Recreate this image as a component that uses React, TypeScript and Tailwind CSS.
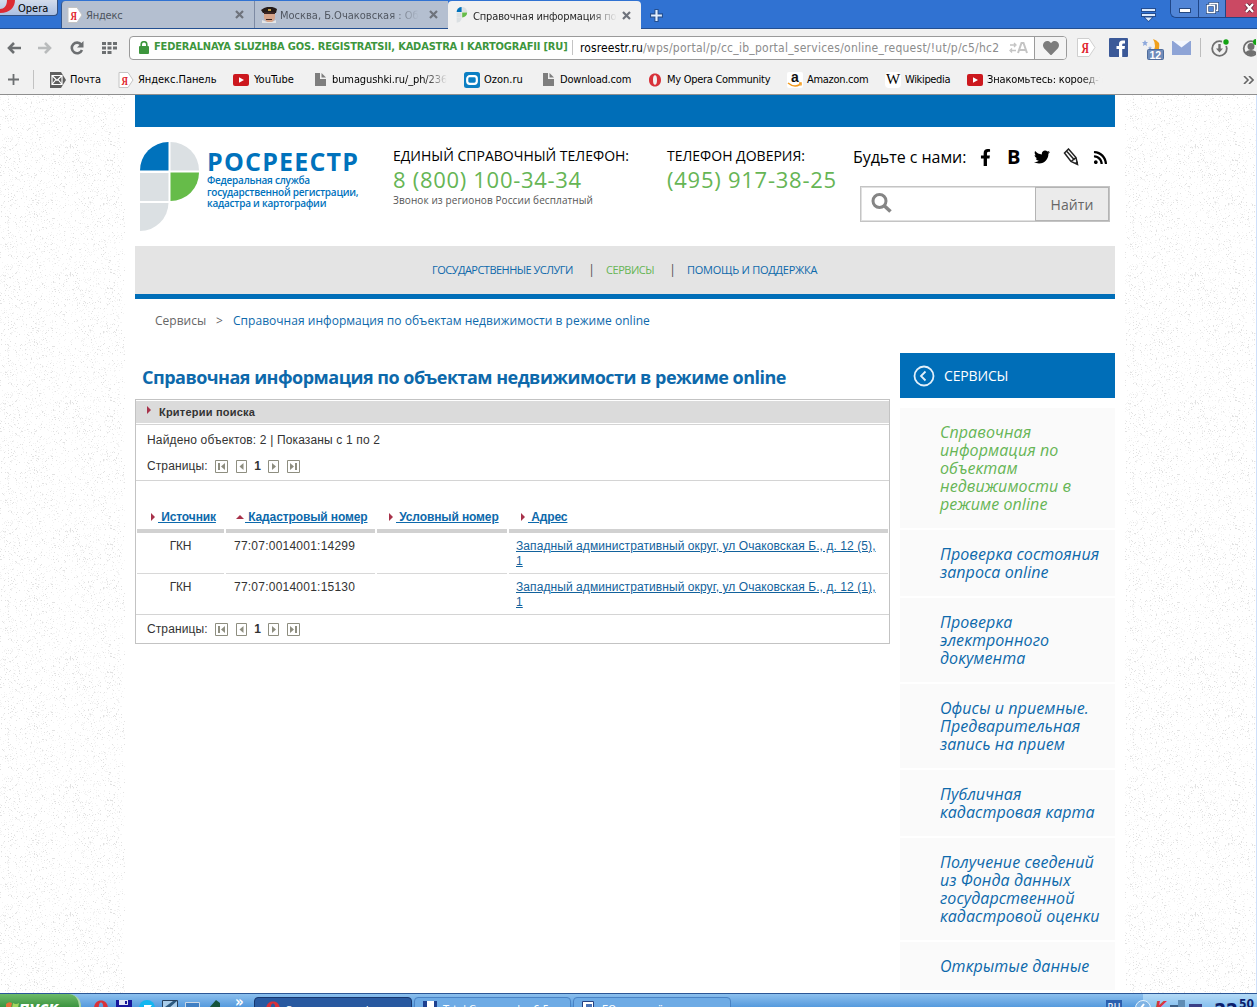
import type { ReactNode } from "react"
import { FaFacebookF, FaTwitter, FaRss, FaHeart } from "react-icons/fa"

const sidebarItems = [
  { lines: ["Справочная", "информация по", "объектам", "недвижимости в", "режиме online"], active: true },
  { lines: ["Проверка состояния", "запроса online"] },
  { lines: ["Проверка", "электронного", "документа"] },
  { lines: ["Офисы и приемные.", "Предварительная", "запись на прием"] },
  { lines: ["Публичная", "кадастровая карта"] },
  { lines: ["Получение сведений", "из Фонда данных", "государственной", "кадастровой оценки"] },
  { lines: ["Открытые данные"] },
]

const rows = [
  { source: "ГКН", number: "77:07:0014001:14299", address: "Западный административный округ, ул Очаковская Б., д. 12 (5)," },
  { source: "ГКН", number: "77:07:0014001:15130", address: "Западный административный округ, ул Очаковская Б., д. 12 (1)," },
]

// Speckles for the paper texture on both sides of the page
function speckles(count: number, seed: number) {
  let s = seed
  let d = ""
  const next = () => {
    s = (s * 1103515245 + 12345) % 2147483648
    return s / 2147483648
  }
  for (let i = 0; i < count; i++) {
    d += `M${Math.floor(next() * 128)} ${Math.floor(next() * 128)}h1v1h-1z`
  }
  return d
}

const lightDots = speckles(1500, 7)
const darkDots = speckles(520, 91)

function Texture({ id }: { id: string }) {
  return (
    <svg className="block size-full" shapeRendering="crispEdges">
      <defs>
        <pattern id={id} width="128" height="128" patternUnits="userSpaceOnUse">
          <path d={lightDots} fill="#f3f3f3" />
          <path d={darkDots} fill="#e2e2e2" />
        </pattern>
      </defs>
      <rect width="100%" height="100%" fill={`url(#${id})`} />
    </svg>
  )
}

function YandexIcon() {
  return (
    <svg width="16" height="16" viewBox="0 0 16 16">
      <path d="M1 .5h9l5 7.5-5 7.5H1Z" fill="#fff" stroke="#c4c4c4" />
      <text transform="translate(3.5 12.500) scale(.68 1)" fontSize="13" fontWeight="700" fill="#e0222b" fontFamily="Liberation Serif, serif">
        Я
      </text>
    </svg>
  )
}

function RosreestrIcon() {
  return (
    <svg width="12" height="16" viewBox="0 0 60 90">
      <path d="M0 28A28 28 0 0 1 28 0V28Z" fill="#0072bc" />
      <path d="M31 0A28 28 0 0 1 59 28H31Z" fill="#dbe0e3" />
      <path d="M0 31H28V59H0Z" fill="#dbe0e3" />
      <path d="M31 31H59A28 28 0 0 1 31 59Z" fill="#66bc49" />
      <path d="M0 61H28A28 28 0 0 1 0 89Z" fill="#dbe0e3" />
    </svg>
  )
}

function CloseIcon() {
  return (
    <svg width="9" height="9" viewBox="0 0 9 9">
      <path d="M1 1 8 8M8 1 1 8" stroke="#6e737c" strokeWidth="2.2" />
    </svg>
  )
}

function YouTubeIcon() {
  return (
    <svg width="16" height="12" viewBox="0 0 16 12">
      <rect width="16" height="12" rx="2" fill="#cc181e" />
      <path d="M6 3.3v5.4L11 6Z" fill="#fff" />
    </svg>
  )
}

function DocIcon() {
  return (
    <svg width="11" height="13" viewBox="0 0 11 13">
      <path d="M0 0h5v6h6v7H0Z" fill="#7e7e7e" />
      <path d="M6.500 0v4.500H11Z" fill="#7e7e7e" />
    </svg>
  )
}

function OperaIcon({ size = 14 }: { size?: number }) {
  return (
    <svg width={size} height={size} viewBox="0 0 14 14">
      <path d="M7 .5C10.500 .5 13 3 13 7s-2.500 6.500-6 6.500S1 11 1 7 3.500.5 7 .5Zm0 1.700C5.600 2.200 5 4 5 7s.6 4.800 2 4.800S9 10 9 7s-.6-4.800-2-4.800Z" fill="#d8323a" fillRule="evenodd" />
    </svg>
  )
}

function Tab({ icon, title, className }: { icon: ReactNode; title: ReactNode; className: string }) {
  return (
    <div className={`flex h-[27px] items-center ${className}`}>
      <span className="flex w-[19px] shrink-0 justify-start">{icon}</span>
      <span className="flex-1 overflow-hidden pt-[3px] leading-4 whitespace-nowrap">{title}</span>
      <CloseIcon />
    </div>
  )
}

function TitleBar() {
  return (
    <div className="flex h-[29px] shrink-0 border-b border-[#234f91] bg-[#3072d2] text-[11px]">
      <div className="flex h-4 w-[58px] items-start overflow-hidden rounded-br border-r border-b border-[#33507f] bg-linear-to-b from-[#d3dcec] to-[#aabfe2]">
        <svg width="18" height="15" viewBox="0 0 18 15">
          <path d="M0 0h15c0 7-5 13-15 13V9c4 0 7-3 7-9Z" fill="#dc2a33" />
        </svg>
        <span className="pt-px text-[11px] leading-[15px] text-black">Opera</span>
      </div>
      <div className="ml-[3px] flex pt-px">
        <Tab
          className="w-[193px] rounded-tl border-l border-[#30548c] bg-[#b4bfd0] pr-[10px] pl-[5px] text-[#4d535d]"
          icon={<YandexIcon />}
          title={<span className="tracking-[-0.2px]">Яндекс</span>}
        />
        <Tab
          className="w-[194px] border-l border-[#7d8aa3] bg-[#b4bfd0] pr-[10px] pl-[6px] text-[#4d535d]"
          icon={
            <svg width="17" height="16" viewBox="0 0 17 16">
              <path d="M3 6h11v5q-1 4-5 5-5-1-6-5Z" fill="#d6a58b" />
              <path d="M0 3Q8-3 16 2l-1 4H2Z" fill="#241b19" />
              <path d="M3 5h11v2H3ZM5 12h6v1H5Z" fill="#3a2522" />
              <path d="M1 13l5 2h5l4-2v3H1Z" fill="#e5e5e5" />
              <path d="M7 2h3v2H7Z" fill="#c6a048" />
            </svg>
          }
          title={
            <span className="bg-linear-to-r from-[#4d535d] from-80% to-[#b4bfd0] bg-clip-text text-transparent">
              Москва, Б.Очаковская : Об
            </span>
          }
        />
        <Tab
          className="h-[28px] w-[193px] rounded-t bg-[#f1f1f1] pr-[10px] pl-[6px] text-[#222]"
          icon={
            <span className="pl-[2px]">
              <RosreestrIcon />
            </span>
          }
          title={
            <span className="bg-linear-to-r from-[#222] from-80% to-[#f1f1f1] bg-clip-text tracking-[-0.15px] text-transparent">
              Справочная информация по
            </span>
          }
        />
      </div>
      <svg className="mt-[9px] ml-[9px]" width="13" height="13" viewBox="0 0 12 12">
        <path d="M4.500 .5h3v4h4v3h-4v4h-3v-4h-4v-3h4Z" fill="#e4effd" stroke="#234f91" />
      </svg>
      <svg className="mt-2 ml-auto" width="15" height="14" viewBox="0 0 15 14">
        <path d="M0 0h15v4H0ZM0 5h15v4H0ZM2.500 9h10l-5 5Z" fill="#244d90" />
        <path d="M1 1h13v2H1ZM1 6h13v2H1ZM4 9.500h7l-3.500 3.500Z" fill="#dbeafc" />
      </svg>
      <div className="ml-[14px] flex h-[18px] w-[87px] overflow-hidden rounded-bl-md border-b border-l border-[#1f4688]">
        <div className="flex w-[27px] items-center justify-center bg-[#5185d6]">
          <span className="mt-1 h-[5px] w-3 border border-[#25487f] bg-white" />
        </div>
        <div className="flex w-[28px] items-start justify-center border-x border-[#1f4688] bg-[#5185d6] pt-[2px]">
          <svg width="13" height="12" viewBox="0 0 13 12">
            <path d="M4 2.500v-1h7.500v7H10M1.500 3.500h7v7h-7Z" fill="none" stroke="#25487f" strokeWidth="3" />
            <path d="M4 2.500v-1h7.500v7H10M1.500 3.500h7v7h-7Z" fill="none" stroke="#fff" strokeWidth="1.600" />
          </svg>
        </div>
        <div className="flex flex-1 items-start justify-end bg-[#cb4963] pt-[3px] pr-[2px]">
          <svg width="11" height="10" viewBox="0 0 11 10">
            <path d="M2 1 9 9M9 1 2 9" stroke="#6c2639" strokeWidth="4" />
            <path d="M2 1 9 9M9 1 2 9" stroke="#fff" strokeWidth="2.300" />
          </svg>
        </div>
      </div>
    </div>
  )
}

function Toolbar() {
  return (
    <div className="flex h-[35px] shrink-0 items-center pt-[2px]">
      <svg className="ml-[7px]" width="14" height="12" viewBox="0 0 14 12">
        <path d="M7 1 2 6l5 5M2 6h12" fill="none" stroke="#6c6f71" strokeWidth="2.600" />
      </svg>
      <svg className="ml-[17px]" width="14" height="12" viewBox="0 0 14 12">
        <path d="M7 1l5 5-5 5M12 6H0" fill="none" stroke="#b9bbbc" strokeWidth="2.600" />
      </svg>
      <svg className="ml-[18px]" width="14" height="14" viewBox="0 0 14 14">
        <path d="M11.300 3.600A5.300 5.300 0 1 0 12 9" fill="none" stroke="#6c6f71" strokeWidth="2.600" />
        <path d="M13.500 0v6.500H7Z" fill="#6c6f71" />
      </svg>
      <svg className="ml-[18px]" width="15" height="12" viewBox="0 0 15 12">
        <path d="M0 0h4v3H0ZM5.500 0h4v3h-4ZM11 0h4v3h-4ZM0 4.500h4v3H0ZM5.500 4.500h4v3h-4ZM11 4.500h4v3h-4ZM0 9h4v3H0ZM5.500 9h4v3h-4Z" fill="#6c6f71" />
      </svg>
      <div className="ml-[12px] flex h-6 w-[938px] items-center overflow-hidden rounded border border-[#9a9a9a] bg-white whitespace-nowrap">
        <svg className="ml-[9px]" width="10" height="13" viewBox="0 0 10 13">
          <path d="M2.200 6V3.500a2.800 2.800 0 0 1 5.600 0V6" fill="none" stroke="#3d963d" strokeWidth="1.600" />
          <rect y="5" width="10" height="8" rx="1" fill="#3d963d" />
        </svg>
        <span className="ml-[5px] w-[413px] text-[11px] font-bold tracking-[-0.18px] text-[#3d963d]">
          FEDERALNAYA SLUZHBA GOS. REGISTRATSII, KADASTRA I KARTOGRAFII [RU]
        </span>
        <span className="ml-[5px] h-[15px] w-px bg-[#c4c4c4]" />
        <span className="ml-[7px] w-[429px] text-[12px] tracking-[0.25px] text-[#8c8c8c]">
          <span className="tracking-[0.1px] text-black">rosreestr.ru</span>/wps/portal/p/cc_ib_portal_services/online_request/!ut/p/c5/hc2
        </span>
        <svg className="shrink-0" width="19" height="12" viewBox="0 0 19 12">
          <path d="M1 3h5M5 1l2 2-2 2M7 8.500H2M3 6.500l-2 2 2 2" fill="none" stroke="#c4c4c4" strokeWidth="1.300" />
          <path d="M9 11 12.500 1h2L18 11M10.500 8h6" fill="none" stroke="#c4c4c4" strokeWidth="2" />
        </svg>
        <span className="ml-auto flex h-full w-8 shrink-0 items-center justify-center border-l border-[#9a9a9a] bg-[#f4f4f4]">
          <FaHeart className="size-4 text-[#7d7d7d]" />
        </span>
      </div>
      <svg className="ml-[10px]" width="19" height="19" viewBox="0 0 19 19">
        <path d="M.5 .5h11.500L18 9.500l-6 9H.5Z" fill="#fff" stroke="#cfcfcf" />
        <text transform="translate(4.500 14.500) scale(.68 1)" fontSize="15" fontWeight="700" fill="#e0222b" fontFamily="Liberation Serif, serif">
          Я
        </text>
      </svg>
      <svg className="ml-[13px]" width="19" height="19" viewBox="0 0 19 19">
        <rect width="19" height="19" rx="1" fill="#3b5998" />
        <path d="M10 19v-8H7.500V8H10V6q0-3.500 3.500-3.500H16v3h-1.500q-1.300 0-1.300 1.300V8H16l-.4 3h-2.400v8Z" fill="#fff" />
      </svg>
      <svg className="mt-1 ml-[13px]" width="23" height="23" viewBox="0 0 23 23">
        <path d="M12 1q8 2 6 10-2 5-10 5 6-3 6-8 0-4-2-7Z" fill="#f0a01c" />
        <path d="m4 2 1 2h2L5.500 5.500 6 8 4 6.700 2 8l.5-2.500L1 4h2ZM9 8l.6 1.400H11L10 10.500l.3 1.500L9 11l-1.300 1 .3-1.500L7 9.400h1.400Z" fill="#8fa9dc" />
        <rect x="6.500" y="11.500" width="16" height="10" rx="1" fill="#6f8cba" stroke="#4f6c9b" />
        <text x="8.500" y="20.500" fontSize="10.500" fontWeight="700" fill="#fff" fontFamily="Liberation Sans, sans-serif">12</text>
      </svg>
      <svg className="ml-[8px]" width="19" height="14" viewBox="0 0 19 14">
        <rect width="19" height="14" fill="#8ea4d6" />
        <path d="M1 0h17L9.500 6.500Z" fill="#f4f7fd" />
      </svg>
      <span className="ml-[9px] h-[19px] w-px bg-[#bdbdbd]" />
      <svg className="ml-[10px]" width="18" height="18" viewBox="0 0 18 18">
        <circle cx="8.500" cy="9.500" r="7.300" fill="none" stroke="#707070" strokeWidth="1.800" />
        <path d="M7.300 5h2.400v4.500H12l-3.500 4-3.500-4h2.300Z" fill="#707070" />
        <circle cx="15" cy="3" r="4" fill="#f1f1f1" />
        <circle cx="15" cy="3" r="2.700" fill="#12a312" />
      </svg>
      <svg className="ml-[13px] shrink-0" width="14" height="18" viewBox="0 0 14 18">
        <circle cx="9" cy="9.500" r="7.300" fill="none" stroke="#707070" strokeWidth="1.800" />
        <circle cx="9" cy="7.500" r="3.500" fill="#707070" />
        <path d="M3 14q2-3 6-3t6 3l-6 3Z" fill="#707070" />
        <circle cx="14" cy="3" r="3" fill="#12a312" />
      </svg>
    </div>
  )
}

function Bookmark({ icon, label, className, textClass = "" }: { icon: ReactNode; label: string; className: string; textClass?: string }) {
  return (
    <div className={`flex shrink-0 items-center whitespace-nowrap ${className}`}>
      <span className="flex w-5 shrink-0 items-center">{icon}</span>
      <span className={`mt-[2px] ${textClass}`}>{label}</span>
    </div>
  )
}

function BookmarksBar() {
  return (
    <div className="flex h-[31px] shrink-0 items-center border-b border-[#8f8f8f] pt-px text-[11px] text-black">
      <svg className="ml-[8px]" width="11" height="11" viewBox="0 0 11 11">
        <path d="M5.500 0v11M0 5.500h11" stroke="#6c6f71" strokeWidth="1.800" />
      </svg>
      <span className="ml-[14px] h-[19px] w-px bg-[#c2c2c2]" />
      <Bookmark
        className="ml-4 w-[68px]"
        label="Почта"
        icon={
          <svg width="16" height="16" viewBox="0 0 16 16">
            <path d="M0 0h11l5 8-5 8H0Z" fill="#5f5f5f" />
            <path d="M2 3.500h10v9H2ZM2 3.500l5 5 5-5M2 12.500l4-5M12 12.500l-4-5" fill="none" stroke="#fff" strokeWidth="1.200" />
          </svg>
        }
      />
      <Bookmark className="w-[115px]" label="Яндекс.Панель" textClass="tracking-[-0.05px]" icon={<YandexIcon />} />
      <Bookmark className="w-[82px]" label="YouTube" textClass="ml-px" icon={<YouTubeIcon />} />
      <Bookmark
        className="w-[149px]"
        label="bumagushki.ru/_ph/236"
        textClass="-ml-[3px] bg-linear-to-r from-black from-75% to-[#f1f1f1] bg-clip-text tracking-[-0.1px] text-transparent"
        icon={<DocIcon />}
      />
      <Bookmark
        className="w-[79px]"
        label="Ozon.ru"
        icon={
          <svg width="16" height="16" viewBox="0 0 16 16">
            <rect width="16" height="16" rx="2.500" fill="#0b7fc3" />
            <rect x="3.200" y="4.200" width="9.600" height="7.600" rx="2.500" fill="none" stroke="#fff" strokeWidth="2.200" />
          </svg>
        }
      />
      <Bookmark className="w-[105px]" label="Download.com" textClass="-ml-[3px] tracking-[-0.2px]" icon={<DocIcon />} />
      <Bookmark className="w-[139px]" label="My Opera Community" textClass="-ml-px tracking-[-0.28px]" icon={<OperaIcon />} />
      <Bookmark
        className="w-[98px]"
        label="Amazon.com"
        textClass="tracking-[-0.3px]"
        icon={
          <svg width="16" height="16" viewBox="0 0 16 16">
            <rect width="16" height="16" rx="2" fill="#fff" />
            <text x="4" y="10" fontSize="14" fontWeight="700" fill="#111" fontFamily="Liberation Sans, sans-serif">a</text>
            <path d="M1 11q6 5 12 1.500M12 11h2v2.500" fill="none" stroke="#f39a1c" strokeWidth="1.500" />
          </svg>
        }
      />
      <Bookmark
        className="w-[82px]"
        label="Wikipedia"
        textClass="tracking-[-0.35px]"
        icon={
          <span className="flex h-4 w-4 items-center justify-center rounded-sm bg-white text-[15px] text-black [font-family:'Liberation_Serif',serif]">
            W
          </span>
        }
      />
      <Bookmark
        className="w-[120px]"
        label="Знакомьтесь: короед-т"
        textClass="bg-linear-to-r from-black from-78% to-[#f1f1f1] to-97% bg-clip-text tracking-[-0.15px] text-transparent"
        icon={<YouTubeIcon />}
      />
      <svg className="mr-[3px] ml-auto" width="11" height="8" viewBox="0 0 11 8">
        <path d="m1 0 4 4-4 4M6 0l4 4-4 4" fill="none" stroke="#666" strokeWidth="1.600" />
      </svg>
    </div>
  )
}

function SiteHeader() {
  return (
    <header className="flex h-[119px] whitespace-nowrap">
      <svg className="mt-[15px] ml-[5px] shrink-0" width="60" height="90" viewBox="0 0 60 90">
        <path d="M0 28.500A28.500 28.500 0 0 1 28.500 0V28.500Z" fill="#0072bc" />
        <path d="M30.500 0A28.500 28.500 0 0 1 59 28.500H30.500Z" fill="#dbe0e3" />
        <path d="M0 31H28.500V59H0Z" fill="#dbe0e3" />
        <path d="M30.500 30.500H59A28.500 28.500 0 0 1 30.500 59Z" fill="#66bc49" />
        <path d="M0 61H28.500A28.500 28.500 0 0 1 0 89Z" fill="#dbe0e3" />
      </svg>
      <div className="mt-[21px] ml-[7px] w-[186px] text-[#0072bc]">
        <div className="h-[27px] text-[25px] leading-[26px] font-bold tracking-[1.2px]">РОСРЕЕСТР</div>
        <div className="text-[10px] leading-[11.5px] font-semibold tracking-[-0.23px]">
          <div>Федеральная служба</div>
          <div>государственной регистрации,</div>
          <div>кадастра и картографии</div>
        </div>
      </div>
      <div className="mt-[19px] w-[274px]">
        <div className="text-[14px] leading-5 text-black">ЕДИНЫЙ СПРАВОЧНЫЙ ТЕЛЕФОН:</div>
        <div className="-mt-[2px] text-[22px] leading-[30px] tracking-[0.7px] text-[#66b555]">8 (800) 100-34-34</div>
        <div className="text-[10px] leading-[13px] tracking-[0.1px] text-[#555]">Звонок из регионов России бесплатный</div>
      </div>
      <div className="mt-[19px] w-[186px]">
        <div className="text-[14px] leading-5 text-black">ТЕЛЕФОН ДОВЕРИЯ:</div>
        <div className="-mt-[2px] text-[22px] leading-[30px] tracking-[0.75px] text-[#66b555]">(495) 917-38-25</div>
      </div>
      <div className="mt-[18px] w-[257px]">
        <div className="flex h-6 items-center text-black">
          <span className="w-[125px] text-[16px] tracking-[-0.05px]">Будьте с нами:</span>
          <FaFacebookF className="-ml-px size-[17px]" />
          <span className="ml-[13px] w-[14px] text-[20px] font-bold">В</span>
          <FaTwitter className="ml-[13px] size-4" />
          <svg className="ml-[13px]" width="16" height="18" viewBox="0 0 16 18">
            <path d="m1.500 5 4-4 7.500 8.500 1.500 7-6.500-3ZM3.500 3l8 9M8 13.500l5-4" fill="none" stroke="#222" strokeWidth="1.500" />
            <path d="m12 14.500 3 2.500v-3.500Z" fill="#222" />
          </svg>
          <FaRss className="ml-[14px] size-[15px]" />
        </div>
        <div className="mt-[17px] ml-[7px] flex h-9 w-[250px] border border-[#c4c4c4] ring-1 ring-[#e0e0e0] ring-inset">
          <div className="flex-1">
            <svg className="mt-[6px] ml-[10px]" width="21" height="20" viewBox="0 0 21 20">
              <circle cx="8.500" cy="8" r="6.500" fill="none" stroke="#858585" strokeWidth="3" />
              <path d="m13 12.500 6.500 6" stroke="#858585" strokeWidth="3.600" />
            </svg>
          </div>
          <button className="w-[74px] border border-[#b4b4b4] bg-[#ebebeb] text-[14px] tracking-[0.1px] text-[#666]">Найти</button>
        </div>
      </div>
    </header>
  )
}

function Pager() {
  return (
    <div className="flex items-center">
      <span className="w-[68px] tracking-[0.1px]">Страницы:</span>
      <svg width="13" height="13" viewBox="0 0 13 13">
        <path d="M.5 .5h12v12H.5Z" fill="#fff" stroke="#8e8e80" />
        <path d="M3 3h2v7H3ZM10 3v7L6 6.500Z" fill="#8e8e80" />
      </svg>
      <svg className="ml-2" width="11" height="13" viewBox="0 0 11 13">
        <path d="M.5 .5h10v12H.5Z" fill="#fff" stroke="#8e8e80" />
        <path d="M7.500 3v7l-4-3.500Z" fill="#8e8e80" />
      </svg>
      <b className="w-[21px] text-center">1</b>
      <svg width="11" height="13" viewBox="0 0 11 13">
        <path d="M.5 .5h10v12H.5Z" fill="#fff" stroke="#8e8e80" />
        <path d="M4 3v7l4-3.500Z" fill="#8e8e80" />
      </svg>
      <svg className="ml-2" width="13" height="13" viewBox="0 0 13 13">
        <path d="M.5 .5h12v12H.5Z" fill="#fff" stroke="#8e8e80" />
        <path d="M8 3h2v7H8ZM3 3v7l4-3.500Z" fill="#8e8e80" />
      </svg>
    </div>
  )
}

function Arrow({ up = false }: { up?: boolean }) {
  return up ? (
    <svg width="8" height="4" viewBox="0 0 8 4">
      <path d="M0 4h8L4 0Z" fill="#a8324a" />
    </svg>
  ) : (
    <svg width="4" height="8" viewBox="0 0 4 8">
      <path d="M0 0v8l4-4Z" fill="#a8324a" />
    </svg>
  )
}

function ColumnHeader({ label, up, className }: { label: string; up?: boolean; className: string }) {
  return (
    <div className={`flex h-[52px] items-center border-b-4 border-[#d1d1d1] pt-6 ${className}`}>
      <Arrow up={up} />
      <a className={`font-bold tracking-[-0.12px] whitespace-pre text-[#0d69ab] underline ${up ? "ml-px" : "ml-[3px]"}`}>{` ${label}`}</a>
    </div>
  )
}

function Results() {
  return (
    <div className="mt-[9px] h-[245px] w-[755px] border border-[#c3c3c3] text-[12px] text-[#333] [font-family:'Liberation_Sans',Arial,sans-serif]">
      <div className="mt-px flex h-[22px] items-center bg-[#dbdbdb] pl-[11px]">
        <span className="-mt-1">
          <Arrow />
        </span>
        <b className="ml-2 text-[11px] tracking-[0.22px] text-[#333]">Критерии поиска</b>
      </div>
      <div className="mt-px h-[57px] border-y border-[#d4d4d4] pt-[7px] pl-[11px]">
        <div className="leading-4 tracking-[0.15px]">Найдено объектов: 2 | Показаны с 1 по 2</div>
        <div className="mt-[9px]">
          <Pager />
        </div>
      </div>
      <div className="grid grid-cols-[87px_149px_130px_379px] gap-x-[2px] px-px">
        <ColumnHeader label="Источник" className="pl-[14px]" />
        <ColumnHeader label="Кадастровый номер" up className="pl-[10px]" />
        <ColumnHeader label="Условный номер" className="pl-[12px]" />
        <ColumnHeader label="Адрес" className="pl-[12px]" />
      </div>
      {rows.map((row, i) => (
        <div key={row.number} className={`grid grid-cols-[87px_149px_130px_379px] gap-x-[2px] px-px leading-[15px] ${i === 0 ? "h-[41px]" : "h-10"}`}>
          <div className={`pt-[6px] text-center tracking-[-0.2px] ${i === 0 ? "border-b border-[#d8d8d8]" : ""}`}>{row.source}</div>
          <div className={`pt-[6px] pl-2 tracking-[0.23px] ${i === 0 ? "border-b border-[#d8d8d8]" : ""}`}>{row.number}</div>
          <div className={i === 0 ? "border-b border-[#d8d8d8]" : ""} />
          <div className={`pt-[6px] pl-[7px] whitespace-nowrap ${i === 0 ? "border-b border-[#d8d8d8]" : ""}`}>
            <a className="tracking-[0.08px] text-[#12629c] underline">
              {row.address}
              <br />1
            </a>
          </div>
        </div>
      ))}
      <div className="h-px bg-[#d4d4d4]" />
      <div className="flex h-7 items-center pl-[11px]">
        <Pager />
      </div>
    </div>
  )
}

function Sidebar() {
  return (
    <aside className="mt-[9px] w-[215px]">
      <div className="flex h-[45px] items-center bg-[#006eb8] pl-[13px] text-white">
        <svg width="22" height="22" viewBox="0 0 22 22">
          <circle cx="11" cy="11" r="9.500" fill="none" stroke="#e3f0fa" strokeWidth="1.800" />
          <path d="m12.500 6.500-4.500 4.500 4.500 4.500" fill="none" stroke="#e3f0fa" strokeWidth="1.800" />
        </svg>
        <span className="ml-[9px] text-[14px] tracking-[-0.15px]">СЕРВИСЫ</span>
      </div>
      <ul className="mt-[10px] flex flex-col gap-[2px]">
        {sidebarItems.map((item) => (
          <li
            key={item.lines[0] + item.lines.length}
            className={`bg-[#fafafa] py-[15px] pl-10 text-[16px] leading-[18px] tracking-[0.08px] whitespace-nowrap italic ${item.active ? "text-[#66b555]" : "text-[#0d69ab]"}`}
          >
            {item.lines.map((line) => (
              <div key={line}>{line}</div>
            ))}
          </li>
        ))}
      </ul>
    </aside>
  )
}

function Taskbar() {
  return (
    <div className="flex h-[14px] shrink-0 items-start overflow-hidden border-t border-[#2b5797] bg-linear-to-b from-[#8cc0ee] to-[#559add] text-[11px] text-white">
      <div className="h-[13px] w-[81px] overflow-hidden rounded-tr-xl border-r-2 border-[#a9d5a0] bg-linear-to-b from-[#6dbb69] to-[#3b9440]">
        <div className="flex pt-[5px] pl-[6px]">
          <svg width="13" height="12" viewBox="0 0 13 12">
            <path d="M0 5q3-3 6-1L5 9Q2 8 0 9Z" fill="#e8703a" />
            <path d="M7 4q3 2 6 0l-1 5q-3 2-6 0Z" fill="#a4d65e" />
          </svg>
          <span className="text-[17px] leading-[18px] font-bold italic">пуск</span>
        </div>
      </div>
      <div className="mt-[6px] ml-[12px] flex w-[130px] items-start gap-[7px]">
        <OperaIcon size={16} />
        <svg width="16" height="16" viewBox="0 0 16 16">
          <path d="M0 0h16v16H0Z" fill="#16169c" />
          <path d="M3 0h9v5H3Z" fill="#dfe4f4" />
          <path d="M9 1h2v3H9Z" fill="#16169c" />
        </svg>
        <svg width="16" height="16" viewBox="0 0 16 16">
          <circle cx="8" cy="8" r="8" fill="#12b6f0" />
          <path d="M5 6h6l-4 6" fill="none" stroke="#fff" strokeWidth="2" />
        </svg>
        <svg width="16" height="16" viewBox="0 0 16 16">
          <path d="M.5 .5h15v15H.5Z" fill="#a9cdea" stroke="#26405c" />
          <path d="M3 7l8-6 4 0-9 8Z" fill="#2d5a80" />
        </svg>
        <svg className="mt-[2px]" width="16" height="14" viewBox="0 0 16 14">
          <path d="M.5 .5h14v12H.5Z" fill="#3f7fc4" stroke="#cbd8e6" />
        </svg>
        <svg width="14" height="16" viewBox="0 0 14 16">
          <path d="M1 8 8 0l4 3v10H4Z" fill="#14543c" />
        </svg>
      </div>
      <span className="mt-[4px] ml-[12px] w-[19px] text-[15px] leading-[8px] font-bold">»</span>
      <div className="mt-[3px] flex h-4 w-[158px] rounded-t-sm border border-[#16366e] bg-[#2859a0] pt-[3px] pl-[10px]">
        <OperaIcon size={16} />
        <span className="mt-[3px] ml-1 leading-[14px] whitespace-nowrap">Справочная инфор...</span>
      </div>
      <div className="mt-[3px] ml-[2px] flex h-4 w-[157px] rounded-t-sm border border-[#4a83c4] bg-[#6eabe5] pt-[3px] pl-[8px]">
        <svg width="15" height="14" viewBox="0 0 15 14">
          <path d="M0 0h14v14H0Z" fill="#1d3f8f" />
          <path d="M4 0h7v6H4Z" fill="#fff" />
        </svg>
        <span className="mt-[2px] ml-[5px] leading-[14px] whitespace-nowrap">Total Commander 6.5...</span>
      </div>
      <div className="mt-[3px] ml-[2px] flex h-4 w-[158px] rounded-t-sm border border-[#4a83c4] bg-[#6eabe5] pt-[3px] pl-[8px]">
        <svg width="14" height="14" viewBox="0 0 14 14">
          <path d="M.5 .5h11v13H.5Z" fill="#fff" stroke="#26407f" />
          <path d="M4 3h6v8H4Z" fill="#4972b5" />
        </svg>
        <span className="mt-[2px] ml-[6px] leading-[14px] whitespace-nowrap">EQипо ненёзния.со...</span>
      </div>
      <span className="mt-[6px] ml-auto h-4 w-4 bg-[#2b5fae] text-center text-[10px] leading-[15px]">RU</span>
      <div className="ml-[21px] flex h-full w-[114px] items-start bg-linear-to-b from-[#b4daf6] to-[#86c0ef] pt-[6px] whitespace-nowrap">
        <svg className="-ml-2" width="16" height="16" viewBox="0 0 16 16">
          <circle cx="8" cy="8" r="7.500" fill="#7fb3e4" stroke="#e6f3fc" />
          <path d="m9 4-3 4 3 4" fill="none" stroke="#fff" strokeWidth="2" />
        </svg>
        <span className="ml-1 text-[16px] leading-[16px] font-bold text-[#d9343f] italic">K</span>
        <svg className="ml-1" width="36" height="14" viewBox="0 0 36 14">
          <path d="M0 5h9v9H0Z" fill="#3c5f86" />
          <path d="M8 0h7v14H8Z" fill="#5f8db5" />
          <path d="M19 4h13v10H19Z" fill="#3a3f86" />
        </svg>
        <span className="ml-2 text-[19px] leading-[21px] font-bold text-[#0b1d6b]">22</span>
        <span className="-mt-[2px] ml-px text-[12px] leading-[13px] font-bold text-[#0b1d6b]">50</span>
      </div>
    </div>
  )
}

export default function App() {
  return (
    <div className="flex h-[1007px] w-[1257px] flex-col overflow-hidden bg-[#f1f1f1] [font-family:'DejaVu_Sans_Condensed','DejaVu_Sans',Tahoma,sans-serif]">
      <TitleBar />
      <Toolbar />
      <BookmarksBar />
      <div className="flex min-h-0 flex-1 overflow-hidden bg-white [font-family:'Open_Sans','Noto_Sans',sans-serif]">
        <div className="w-[125px] shrink-0">
          <Texture id="paper-left" />
        </div>
        <div className="w-[1000px] shrink-0 px-[10px]">
          <div className="h-8 bg-[#006eb8]" />
          <SiteHeader />
          <nav className="flex h-[53px] items-center border-b-[5px] border-[#006eb8] bg-[#e4e4e4] pl-[297px] text-[11px] whitespace-nowrap text-[#0d69ab]">
            <a className="w-[156px] tracking-[-0.52px]">ГОСУДАРСТВЕННЫЕ УСЛУГИ</a>
            <span className="w-[18px] text-[13px] text-[#555]">|</span>
            <a className="w-[63px] tracking-[-0.45px] text-[#66b555]">СЕРВИСЫ</a>
            <span className="w-[18px] text-[13px] text-[#555]">|</span>
            <a className="tracking-[-0.25px]">ПОМОЩЬ И ПОДДЕРЖКА</a>
          </nav>
          <div className="flex h-[45px] items-center pb-px pl-5 text-[12px] whitespace-nowrap text-[#666]">
            <span className="w-[61px]">Сервисы</span>
            <span className="w-[17px]">&gt;</span>
            <a className="tracking-[0.03px] text-[#0d69ab]">Справочная информация по объектам недвижимости в режиме online</a>
          </div>
          <div className="flex justify-between">
            <main className="pt-[20px]">
              <h1 className="pl-[7px] text-[18px] leading-[26px] font-bold tracking-[-0.52px] whitespace-nowrap text-[#0d69ab]">
                Справочная информация по объектам недвижимости в режиме online
              </h1>
              <Results />
            </main>
            <Sidebar />
          </div>
        </div>
        <div className="w-[131px] shrink-0">
          <Texture id="paper-right" />
        </div>
        <div className="w-px bg-[#cfe0fa]" />
      </div>
      <Taskbar />
    </div>
  )
}
